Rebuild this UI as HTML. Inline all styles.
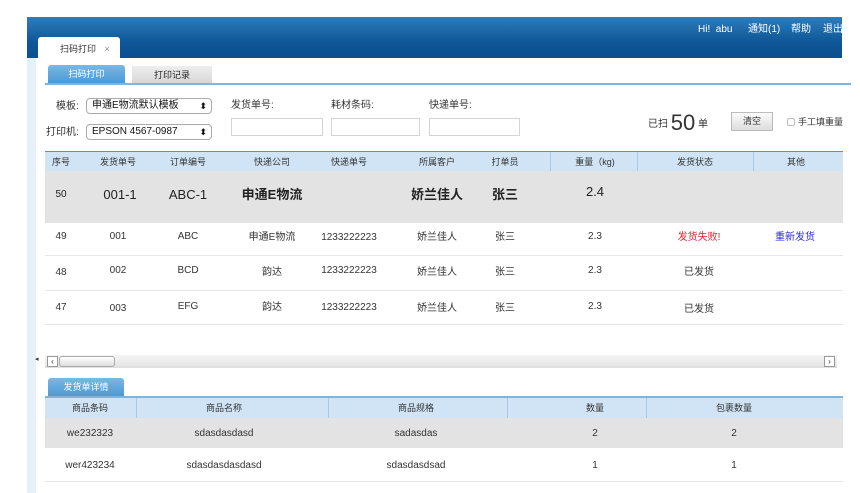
<!DOCTYPE html>
<html><head><meta charset="utf-8"><style>
*{margin:0;padding:0;box-sizing:border-box}
body{width:860px;height:493px;background:#fff;position:relative;overflow:hidden;font-family:"Liberation Sans","Noto Sans CJK SC",sans-serif;font-size:10px;color:#333;line-height:12px}
.a{position:absolute}
.hdr{left:27px;top:17px;width:815px;height:41px;background:linear-gradient(#2f7dbb,#0f5798 60%,#0b4f8f)}
.strip{left:27px;top:58px;width:9px;height:435px;background:#e6f0f8}
.c{position:absolute;text-align:center;transform:translateX(-50%);white-space:nowrap}
.line{position:absolute;height:1px;background:#e6e6e6}
.inp{position:absolute;border:1px solid #d4d4d4;height:18px;background:#fff}
.sel{position:absolute;border:1px solid #aaa;border-radius:4px;height:16px;background:#fff;font-size:10px;padding-left:5px;line-height:14px;color:#111}
.sel:after{content:"⬍";position:absolute;right:4px;top:0;font-size:9px}
.vs{position:absolute;width:1px;background:#a9c8e6}
.hn{position:absolute;top:24px;color:#fff;font-size:10px;line-height:12px;white-space:nowrap}
</style></head><body>
<div class="a hdr"></div>
<div class="hn" style="left:698px">Hi!&nbsp; abu</div>
<div class="hn" style="left:748px">通知(1)</div>
<div class="hn" style="left:791px">帮助</div>
<div class="hn" style="left:823px">退出</div>
<div class="a strip"></div>
<div class="a" style="left:38px;top:37px;width:82px;height:21px;background:#fff;border-radius:3px 3px 0 0;padding:6px 0 0 22px;font-size:9px">扫码打印 <span style="color:#888;margin-left:6px">×</span></div>
<div class="a" style="left:48px;top:65px;width:77px;height:19px;background:linear-gradient(#7ab8e6,#4a97d3);border-radius:3px 3px 0 0;color:#fff;text-align:center;line-height:18px;font-size:9px">扫码打印</div>
<div class="a" style="left:132px;top:66px;width:80px;height:18px;background:linear-gradient(#eee,#d6d6d6);text-align:center;line-height:18px;font-size:9px;color:#222">打印记录</div>
<div class="a" style="left:45px;top:83px;width:806px;height:2px;background:#7db4e0"></div>

<div class="a" style="left:56px;top:101px">模板:</div>
<div class="sel" style="left:86px;top:98px;width:126px">申通E物流默认模板</div>
<div class="a" style="left:46px;top:127px">打印机:</div>
<div class="sel" style="left:86px;top:124px;width:126px">EPSON 4567-0987</div>
<div class="a" style="left:231px;top:100px">发货单号:</div>
<div class="a" style="left:331px;top:100px">耗材条码:</div>
<div class="a" style="left:429px;top:100px">快递单号:</div>
<div class="inp" style="left:231px;top:118px;width:92px"></div>
<div class="inp" style="left:331px;top:118px;width:89px"></div>
<div class="inp" style="left:429px;top:118px;width:91px"></div>
<div class="a" style="left:648px;top:112px;line-height:22px">已扫 <span style="font-size:22px;vertical-align:-3px">50</span> 单</div>
<div class="a" style="left:731px;top:112px;width:42px;height:19px;border:1px solid #bbb;background:linear-gradient(#fafafa,#ddd);text-align:center;line-height:17px;font-size:9px">清空</div>
<div class="a" style="left:787px;top:118px;width:8px;height:8px;border:1px solid #bbb;border-radius:2px"></div>
<div class="a" style="left:798px;top:116px;font-size:9px">手工填重量</div>

<div class="a" style="left:45px;top:151px;width:798px;height:20px;background:#d0e4f6;border-top:1px solid #5a8fc0"></div>
<div class="vs" style="left:550px;top:152px;height:19px"></div>
<div class="vs" style="left:637px;top:152px;height:19px"></div>
<div class="vs" style="left:753px;top:152px;height:19px"></div>
<div class="a" style="left:45px;top:171px;width:798px;height:52px;background:#e3e3e3"></div>
<div style="font-size:9px">
<div class="c" style="left:61px;top:156px">序号</div><div class="c" style="left:118px;top:156px">发货单号</div><div class="c" style="left:188px;top:156px">订单编号</div><div class="c" style="left:272px;top:156px">快递公司</div><div class="c" style="left:349px;top:156px">快递单号</div><div class="c" style="left:437px;top:156px">所属客户</div><div class="c" style="left:505px;top:156px">打单员</div><div class="c" style="left:595px;top:156px">重量（kg)</div><div class="c" style="left:695px;top:156px">发货状态</div><div class="c" style="left:796px;top:156px">其他</div>
</div>
<div style="font-size:13px;color:#222;line-height:16px">
<div class="c" style="left:61px;top:187px;font-size:10px">50</div><div class="c" style="left:120px;top:187px">001-1</div><div class="c" style="left:188px;top:187px">ABC-1</div><div class="c" style="left:272px;top:187px;font-weight:bold">申通E物流</div><div class="c" style="left:437px;top:187px;font-weight:bold">娇兰佳人</div><div class="c" style="left:505px;top:187px;font-weight:bold">张三</div><div class="c" style="left:595px;top:184px">2.4</div>
</div>
<div class="line" style="left:45px;top:255px;width:798px"></div>
<div class="line" style="left:45px;top:290px;width:798px"></div>
<div class="line" style="left:45px;top:324px;width:798px"></div>
<div style="font-size:10px;color:#333">
<div class="c" style="left:61px;top:231px">49</div><div class="c" style="left:118px;top:231px">001</div><div class="c" style="left:188px;top:231px">ABC</div><div class="c" style="left:272px;top:232px">申通E物流</div><div class="c" style="left:349px;top:232px">1233222223</div><div class="c" style="left:437px;top:232px">娇兰佳人</div><div class="c" style="left:505px;top:232px">张三</div><div class="c" style="left:595px;top:231px">2.3</div><div class="c" style="left:699px;top:232px;color:#e8202a">发货失败!</div><div class="c" style="left:795px;top:232px;color:#2a2ae0">重新发货</div>
<div class="c" style="left:61px;top:267px">48</div><div class="c" style="left:118px;top:265px">002</div><div class="c" style="left:188px;top:265px">BCD</div><div class="c" style="left:272px;top:267px">韵达</div><div class="c" style="left:349px;top:265px">1233222223</div><div class="c" style="left:437px;top:267px">娇兰佳人</div><div class="c" style="left:505px;top:267px">张三</div><div class="c" style="left:595px;top:265px">2.3</div><div class="c" style="left:699px;top:267px">已发货</div>
<div class="c" style="left:61px;top:302px">47</div><div class="c" style="left:118px;top:303px">003</div><div class="c" style="left:188px;top:301px">EFG</div><div class="c" style="left:272px;top:302px">韵达</div><div class="c" style="left:349px;top:302px">1233222223</div><div class="c" style="left:437px;top:303px">娇兰佳人</div><div class="c" style="left:505px;top:303px">张三</div><div class="c" style="left:595px;top:301px">2.3</div><div class="c" style="left:699px;top:304px">已发货</div>
</div>

<div class="a" style="left:45px;top:355px;width:792px;height:13px;background:linear-gradient(#f4f4f4,#e6e6e6);border-bottom:2px solid #e0e0e0"></div>
<div class="a" style="left:47px;top:356px;width:11px;height:11px;border:1px solid #999;background:#fff;font-size:8px;line-height:9px;text-align:center">‹</div>
<div class="a" style="left:59px;top:356px;width:56px;height:11px;border:1px solid #aaa;border-radius:3px;background:linear-gradient(#fff,#ddd)"></div>
<div class="a" style="left:824px;top:356px;width:11px;height:11px;border:1px solid #999;background:#fff;font-size:8px;line-height:9px;text-align:center">›</div>
<div class="a" style="left:35px;top:354px;font-size:7px">◂</div>

<div class="a" style="left:48px;top:378px;width:76px;height:19px;background:linear-gradient(#7ab8e6,#4a97d3);border-radius:3px 3px 0 0;color:#fff;text-align:center;line-height:18px;font-size:9px">发货单详情</div>
<div class="a" style="left:45px;top:396px;width:798px;height:22px;background:#d0e4f6;border-top:2px solid #7db4e0"></div>
<div class="vs" style="left:136px;top:398px;height:20px"></div>
<div class="vs" style="left:328px;top:398px;height:20px"></div>
<div class="vs" style="left:507px;top:398px;height:20px"></div>
<div class="vs" style="left:646px;top:398px;height:20px"></div>
<div class="a" style="left:45px;top:418px;width:798px;height:30px;background:#e3e3e3"></div>
<div class="line" style="left:45px;top:481px;width:798px"></div>
<div style="font-size:9px">
<div class="c" style="left:90px;top:402px">商品条码</div><div class="c" style="left:224px;top:402px">商品名称</div><div class="c" style="left:416px;top:402px">商品规格</div><div class="c" style="left:595px;top:402px">数量</div><div class="c" style="left:734px;top:402px">包裹数量</div>
</div>
<div style="font-size:10px">
<div class="c" style="left:90px;top:428px">we232323</div><div class="c" style="left:224px;top:428px">sdasdasdasd</div><div class="c" style="left:416px;top:428px">sadasdas</div><div class="c" style="left:595px;top:428px">2</div><div class="c" style="left:734px;top:428px">2</div>
<div class="c" style="left:90px;top:460px">wer423234</div><div class="c" style="left:224px;top:460px">sdasdasdasdasd</div><div class="c" style="left:416px;top:460px">sdasdasdsad</div><div class="c" style="left:595px;top:460px">1</div><div class="c" style="left:734px;top:460px">1</div>
</div>
</body></html>
